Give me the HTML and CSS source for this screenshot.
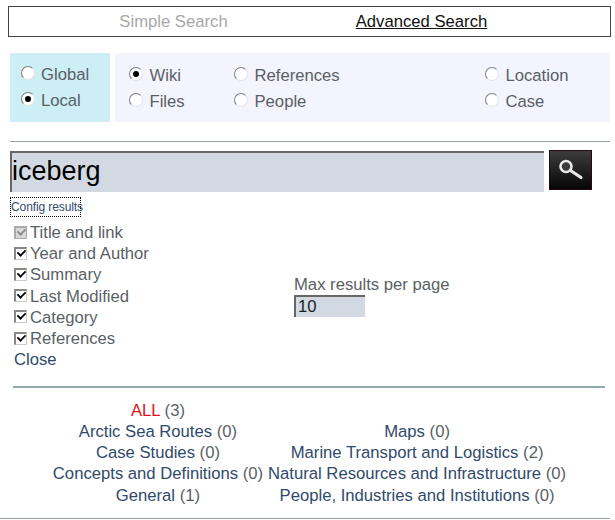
FILE: index.html
```html
<!DOCTYPE html>
<html lang="en">
<head>
<meta charset="utf-8">
<title>Search</title>
<link rel="stylesheet" href="styles.css">
</head>
<body>
<nav class="tabs">
  <a class="tab tab-off">Simple Search</a>
  <a class="tab tab-on">Advanced Search</a>
</nav>
<section class="scopes">
  <div class="scope-a">
    <label class="opt"><input type="radio" name="a" class="radio"><span>Global</span></label>
    <label class="opt"><input type="radio" name="a" class="radio" checked><span>Local</span></label>
  </div>
  <div class="scope-b">
    <div class="col col1">
      <label class="opt"><input type="radio" name="b" class="radio" checked><span>Wiki</span></label>
      <label class="opt"><input type="radio" name="b" class="radio"><span>Files</span></label>
    </div>
    <div class="col col2">
      <label class="opt"><input type="radio" name="b" class="radio"><span>References</span></label>
      <label class="opt"><input type="radio" name="b" class="radio"><span>People</span></label>
    </div>
    <div class="col col3">
      <label class="opt"><input type="radio" name="b" class="radio"><span>Location</span></label>
      <label class="opt"><input type="radio" name="b" class="radio"><span>Case</span></label>
    </div>
  </div>
</section>
<hr class="rule-top">
<div class="searchbar">
  <input class="query" type="text" value="iceberg">
  <button class="go" type="button" aria-label="Search">
    <svg width="43" height="40" viewBox="0 0 43 40">
      <defs><linearGradient id="g" x1="0" y1="0" x2="0" y2="1"><stop offset="0" stop-color="#3c3c3c"/><stop offset="1" stop-color="#060606"/></linearGradient></defs>
      <rect width="43" height="40" fill="#2a0a12"/>
      <rect x="1" y="1" width="41" height="38" fill="url(#g)"/>
      <circle cx="17" cy="16.500" r="5.500" fill="#3a3a3a" stroke="#e8e8e8" stroke-width="2.600"/>
      <path d="M21.500 20.500 L32 27.500" stroke="#e8e8e8" stroke-width="3.200" stroke-linecap="round"/>
    </svg>
  </button>
</div>
<a class="config">Config results</a>
<div class="settings">
  <div class="checks">
    <label class="chk"><input type="checkbox" class="box" checked disabled><span>Title and link</span></label>
    <label class="chk"><input type="checkbox" class="box" checked><span>Year and Author</span></label>
    <label class="chk"><input type="checkbox" class="box" checked><span>Summary</span></label>
    <label class="chk"><input type="checkbox" class="box" checked><span>Last Modified</span></label>
    <label class="chk"><input type="checkbox" class="box" checked><span>Category</span></label>
    <label class="chk"><input type="checkbox" class="box" checked><span>References</span></label>
    <a class="close">Close</a>
  </div>
  <div class="maxres">
    <label class="maxlabel" for="mx">Max results per page</label>
    <input id="mx" class="maxinput" type="text" value="10">
  </div>
</div>
<hr class="rule-mid">
<div class="cats">
  <div class="cat"><a class="all">ALL</a> <span class="n">(3)</span></div><div></div>
  <div class="cat"><a>Arctic Sea Routes</a> <span class="n">(0)</span></div>
  <div class="cat"><a>Maps</a> <span class="n">(0)</span></div>
  <div class="cat"><a>Case Studies</a> <span class="n">(0)</span></div>
  <div class="cat"><a>Marine Transport and Logistics</a> <span class="n">(2)</span></div>
  <div class="cat"><a>Concepts and Definitions</a> <span class="n">(0)</span></div>
  <div class="cat"><a>Natural Resources and Infrastructure</a> <span class="n">(0)</span></div>
  <div class="cat"><a>General</a> <span class="n">(1)</span></div>
  <div class="cat"><a>People, Industries and Institutions</a> <span class="n">(0)</span></div>
</div>
<hr class="rule-end">
</body>
</html>
```
FILE: styles.css
```css
* { box-sizing: border-box; }
html, body { margin: 0; padding: 0; background: #fff; }
body {
  width: 615px; height: 520px; overflow: hidden;
  font-family: "Liberation Sans", Arial, sans-serif;
  font-size: 16.67px; color: #5a5f66;
  padding-top: 6px;
}
.tabs {
  margin: 0 4px 0 8px; height: 31px;
  border: 1px solid #444;
  display: grid; grid-template-columns: 329px 1fr;
}
.tab { text-align: center; line-height: 29px; }
.tab-off { color: #a8a8a8; }
.tab-on { color: #111; text-decoration: underline; padding-right: 105px; }

.scopes { display: flex; gap: 5px; margin: 16px 5px 0 10px; height: 69px; }
.scope-a { width: 100px; background: #cdeef4; padding: 9px 0 0 11px; }
.scope-b { flex: 1; background: #f3f4fd; padding: 10px 0 0 14px; display: flex; }
.col1 { width: 105px; }
.col2 { width: 251px; }
.opt { display: flex; align-items: center; gap: 6px; height: 26px; }
.col .opt { gap: 6.5px; }

.radio {
  appearance: none; margin: 0 0 4px; width: 14px; height: 14px; border-radius: 50%;
  background: #fff; border: 1px solid #e4e4e4; border-left-color: #808080; border-top-color: #808080;
  flex: none; display: grid; place-items: center;
}
.radio:checked::after { content: ""; width: 6px; height: 6px; border-radius: 50%; background: #000; }

hr { border: 0; margin: 0; }
.rule-top { height: 1px; background: #9aa3a3; margin: 19px 5px 0 10px; }

.searchbar { display: flex; gap: 5px; margin: 8px 0 0 10px; align-items: flex-start; }
.query {
  width: 534px; height: 41px; margin-top: 1px;
  background: #d2d9e3; border: 0; border-top: 2px solid #666; border-left: 2px solid #666;
  font: 27px "Liberation Sans", Arial, sans-serif; color: #000; padding: 0 0 2px; outline: 0;
}
.go { padding: 0; border: 0; background: none; width: 43px; height: 40px; display: block; }
.go svg { display: block; }

.config {
  display: block; width: 71px; height: 20px; margin: 5px 0 0 10px;
  border: 1px dotted #000; font-size: 12px; line-height: 18px; white-space: nowrap;
  color: #2f4a6b; letter-spacing: -0.1px;
}

.settings { display: flex; margin: 5.5px 0 0 14px; }
.checks { width: 280px; }
.chk { display: flex; align-items: center; gap: 3px; height: 21.2px; }
.close { display: block; height: 21.2px; line-height: 21.2px; margin-top: -0.4px; color: #2f4a6b; }
.box {
  appearance: none; margin: 0 0 2px; width: 13px; height: 13px; flex: none;
  background: #fff; border: 1px solid #ccc; border-left: 2px solid #888; border-top: 2px solid #888;
  position: relative;
}
.box:checked::after {
  content: ""; position: absolute; left: 1px; top: 0px; width: 7px; height: 4px;
  border-left: 2px solid #000; border-bottom: 2px solid #000;
  transform: rotate(-45deg) scale(.9);
}
.box:disabled { background: #d8d8d8; border-color: #aaa; }
.box:disabled::after { border-color: #888; }

.maxres { padding-top: 51.5px; display: flex; flex-direction: column; align-items: flex-start; }
.maxlabel { height: 21px; line-height: 21px; }
.maxinput {
  width: 71px; height: 22px; background: #d2d9e3; border: 0;
  border-top: 2px solid #666; border-left: 2px solid #666;
  font: 16.67px "Liberation Sans", Arial, sans-serif; color: #222; padding: 0 0 0 2px; outline: 0;
}

.rule-mid { height: 2px; background: #8fabab; margin: 15.9px 10px 0 13px; }

.cats {
  display: grid; grid-template-columns: max-content max-content; justify-content: center;
  column-gap: 5px; margin: 11.6px 0 0 4px;
  grid-auto-rows: 21.2px;
}
.cat { text-align: center; line-height: 21.2px; }
.cat a { color: #2f4a6b; }
.cat a.all { color: #e0101a; }
.n { color: #5a5f66; }

.rule-end { height: 1px; background: #9aa3a3; margin: 12.4px 5px 0 0; }
```
